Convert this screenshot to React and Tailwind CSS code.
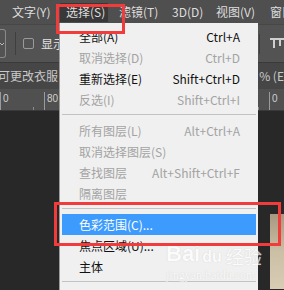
const CJK = { fontFamily: '"Noto Sans CJK SC", "Noto Sans", sans-serif' };

const topMenus = [
  { label: "文字(Y)", w: "w-[48px]" },
  { label: "选择(S)", w: "w-[48px] pl-[6px] bg-[#383838]" },
  { label: "滤镜(T)", w: "w-[53px] ml-[11px]" },
  { label: "3D(D)", w: "w-[44px]" },
  { label: "视图(V)", w: "w-[54px]" },
  { label: "窗口(W)", w: "w-[60px]" },
];

const groups = [
  [
    { label: "全部(A)", key: "Ctrl+A" },
    { label: "取消选择(D)", key: "Ctrl+D", off: true },
    { label: "重新选择(E)", key: "Shift+Ctrl+D" },
    { label: "反选(I)", key: "Shift+Ctrl+I", off: true },
  ],
  [
    { label: "所有图层(L)", key: "Alt+Ctrl+A", off: true },
    { label: "取消选择图层(S)", off: true },
    { label: "查找图层", key: "Alt+Shift+Ctrl+F", off: true },
    { label: "隔离图层", off: true },
  ],
  [
    { label: "色彩范围(C)...", active: true },
    { label: "焦点区域(U)..." },
    { label: "主体" },
  ],
];

function MenuRow({ item }) {
  let color = "text-[#111]";
  if (item.off) color = "text-[#a3a3a3]";
  if (item.active) color = "text-white bg-[#3c9bfc]";
  return (
    <div className={`h-[21px] flex items-center justify-between pl-[17px] pr-[16px] text-[12px] ${color}`}>
      <span>{item.label}</span>
      {item.key && <span>{item.key}</span>}
    </div>
  );
}

function Separator({ last }) {
  return <div className={last ? "pt-[4px]" : "pt-[4px] pb-[5px]"}><div className="h-px bg-[#c2c2c2]" /></div>;
}

// ruler: [width of segment, label, major tick at start]
const ruler = [
  { w: "w-[44px]", label: "0", major: true },
  { w: "w-[225px]", label: "80", major: true },
  { w: "w-[15px]", label: "0", major: true },
];

export default function App() {
  return (
    <div className="relative w-[284px] h-[290px] overflow-hidden bg-[#282828]" style={CJK}>
      {/* menu bar */}
      <div className="h-[24px] bg-[#4f4f4f] flex items-center pl-[12px] text-[12px] text-[#dedede] whitespace-nowrap">
        {topMenus.map((m) => (
          <div key={m.label} className={`${m.w} shrink-0 h-[19px] flex items-center`}>
            {m.label}
          </div>
        ))}
      </div>

      {/* options bar */}
      <div className="h-[38px] bg-[#535353] border-t border-[#474747] flex items-center">
        <div className="w-[6px] h-[29px] border border-[#8a8a8a] border-l-0 rounded-r-[3px] flex items-center justify-end pr-[1px]">
          <svg width="4" height="4" viewBox="0 0 4 4"><path d="M0 1 L2 3 L4 1" stroke="#bbb" fill="none" /></svg>
        </div>
        <div className="ml-[9px] w-px h-[23px] bg-[#3f3f3f]" />
        <div className="ml-[7px] w-[11px] h-[11px] rounded-[2px] border border-[#9a9a9a]" />
        <span className="ml-[7px] text-[12px] text-[#e2e2e2]">显示</span>
        <div className="ml-auto flex items-center">
          <div className="w-px h-[20px] bg-[#3f3f3f] mr-[10px]" />
          <svg width="14" height="12" viewBox="0 0 14 12">
            <rect x="0" y="0" width="14" height="2" fill="#cfcfcf" />
            <rect x="3" y="2" width="2" height="8" fill="#cfcfcf" />
            <rect x="9" y="2" width="2" height="6" fill="#cfcfcf" />
          </svg>
        </div>
      </div>

      {/* document tab */}
      <div className="h-[27px] bg-[#464646] border-t border-[#3a3a3a] flex items-center justify-between text-[12px] text-[#c9c9c9] whitespace-nowrap">
        <span className="-ml-[2px]">可更改衣服</span>
        <span>% (E</span>
      </div>

      {/* ruler */}
      <div
        className="h-[22px] bg-[#505050] border-b border-[#3a3a3a] flex items-end text-[10px] text-[#cfcfcf]"
        style={{ fontFamily: '"Liberation Sans", sans-serif' }}
      >
        {ruler.map((r, i) => (
          <div key={i} className={`${r.w} shrink-0 h-[18px] border-l border-[#9a9a9a] flex items-end justify-between`}>
            <span className="self-start pl-[2px] pt-[2px] leading-none">{r.label}</span>
            <div className="w-px h-[3px] bg-[#8a8a8a] mr-[10px]" />
          </div>
        ))}
      </div>

      {/* canvas with photo edge */}
      <div className="flex justify-end pt-[103px]">
        <div className="w-[14px] h-[75px] bg-gradient-to-b from-[#a89880] via-[#cbbfa6] to-[#d8ccb4]" />
      </div>

      {/* dropdown menu */}
      <div className="absolute left-[59px] top-[23px] w-[199px] h-[280px] bg-[#f0f0f0] border-l border-[#9c9c9c] pt-[3px] px-[2px] whitespace-nowrap">
        {groups.map((g, gi) => (
          <div key={gi}>
            {g.map((item) => (
              <MenuRow key={item.label} item={item} />
            ))}
            <Separator last={gi === groups.length - 1} />
          </div>
        ))}
      </div>

      {/* watermark */}
      <div className="absolute left-[166px] top-[243px] text-white opacity-75 [text-shadow:0_0_1px_#bdbdbd] pointer-events-none">
        <div className="flex items-end leading-none" style={{ fontFamily: '"Liberation Sans", sans-serif' }}>
          <span className="text-[22px] font-bold">Bai</span>
          <span className="text-[16px] font-bold ml-[2px]">du</span>
          <span className="text-[18px] ml-[4px]" style={CJK}>经验</span>
        </div>
        <div className="text-[12px] leading-none mt-[4px]" style={{ fontFamily: '"Liberation Serif", serif' }}>jingyan.baidu.com</div>
      </div>

      {/* annotation boxes */}
      <div className="absolute left-[56px] top-[4px] w-[69px] h-[30px] border-[3px] border-[#f23b3b]" />
      <div className="absolute left-[54px] top-[202px] w-[227px] h-[44px] border-[3px] border-[#f23b3b]" />
    </div>
  );
}
